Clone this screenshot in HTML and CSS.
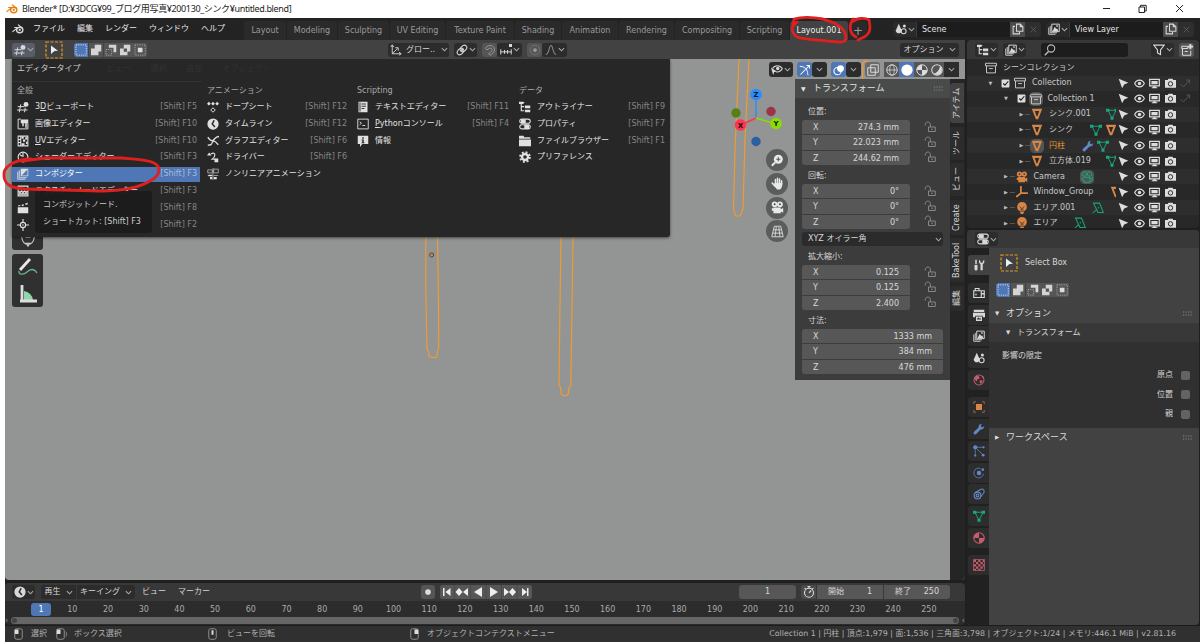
FILE: index.html
```html
<!DOCTYPE html>
<html lang="ja">
<head>
<meta charset="utf-8">
<title>Blender</title>
<link rel="stylesheet" href="styles.css">
</head>
<body>
<svg class="sprite" aria-hidden="true">
  <symbol id="chev" viewBox="0 0 8 8"><path d="M1 2.500l3 3 3-3" fill="none" stroke="currentColor" stroke-width="1.200"/></symbol>
  <symbol id="blender" viewBox="0 0 16 16"><path d="M1 11.500L8 6H3.500M8.500 2.500L14 7" fill="none" stroke="currentColor" stroke-width="1.600" stroke-linecap="round"/><ellipse cx="10.300" cy="9.300" rx="4.200" ry="3.700" fill="none" stroke="currentColor" stroke-width="1.800"/><circle cx="10.300" cy="9.300" r="1.500" fill="currentColor"/></symbol>
  <symbol id="view3d" viewBox="0 0 16 16"><path d="M1 7.500h9M0 12h14M5 4.500L3 15M11 9L10 15" fill="none" stroke="currentColor" stroke-width="1.300"/><circle cx="12" cy="4.500" r="3.300" fill="currentColor"/></symbol>
  <symbol id="image" viewBox="0 0 16 16"><path d="M5 1.500H1.500v13h13V7" fill="none" stroke="currentColor" stroke-width="1.300"/><path d="M5 2h10v5h-2v6h-2V7H9v4H7V7H5z" fill="currentColor"/></symbol>
  <symbol id="uv" viewBox="0 0 16 16"><path d="M1.500 1.500h13v13h-13zM5 2v12M2 6h3M2 10h3" fill="none" stroke="currentColor" stroke-width="1.400"/><path d="M6 2h3v3H6zM11 3h3v3h-3zM8 6h3v3H8zM12 9h2v3h-2zM6 11h4v3H6z" fill="currentColor"/></symbol>
  <symbol id="shader" viewBox="0 0 16 16"><circle cx="8" cy="8" r="6.500" fill="none" stroke="currentColor" stroke-width="1.500"/><path d="M8 8V2M4 5l3 2" stroke="currentColor" stroke-width="1.500"/></symbol>
  <symbol id="comp" viewBox="0 0 16 16"><path d="M5 1h10v10H5z" fill="currentColor"/><path d="M6 10l8-8v8z" fill="#5078b8"/><path d="M3 3v10h10M1 5v10h10" fill="none" stroke="currentColor" stroke-width="1.200"/></symbol>
  <symbol id="texture" viewBox="0 0 16 16"><path d="M1.500 1.500h13v13h-13zM2 5h12" fill="none" stroke="currentColor" stroke-width="1.500"/><path d="M2 8l2 2 2-2 2 2 2-2 2 2 2-2M2 12h12" fill="none" stroke="currentColor" stroke-width="1.700"/></symbol>
  <symbol id="clapper" viewBox="0 0 16 16"><path d="M1 7h14v8H1zM1 5l3-1 1 1-3 1zM6 3.500L9 3v2L7 5.500zM11 2l3-1 .5 2-3 1z" fill="currentColor"/></symbol>
  <symbol id="track" viewBox="0 0 16 16"><circle cx="8" cy="8" r="3.500" fill="none" stroke="currentColor" stroke-width="1.500"/><path d="M8 0v4M8 12v4M0 8h4M12 8h4" stroke="currentColor" stroke-width="1.500"/><circle cx="8" cy="8" r="1" fill="currentColor"/></symbol>
  <symbol id="dope" viewBox="0 0 16 16"><path d="M0 3.500L2.500 1 5 3.500 2.500 6zM5.500 3.500L8 1l2.500 2.500L8 6zM11 3.500L13.500 1 16 3.500 13.500 6z" fill="currentColor"/><path d="M8 9l3 3-3 3-3-3z" fill="none" stroke="currentColor" stroke-width="1.300"/></symbol>
  <symbol id="clock" viewBox="0 0 16 16"><circle cx="8" cy="8" r="7.500" fill="currentColor"/><path d="M9.500 3L7 8l3.500 4" fill="none" stroke="#272727" stroke-width="2"/></symbol>
  <symbol id="graph" viewBox="0 0 16 16"><path d="M1 3c4 5 5 5 7 4s3-5 8-5M1 13.500c5 0 5-1 6-3.500s3-3 8 3" fill="none" stroke="currentColor" stroke-width="1.700"/></symbol>
  <symbol id="driver" viewBox="0 0 16 16"><path d="M5 4c8-4 6 4 2 7h5" fill="none" stroke="currentColor" stroke-width="1.500"/><path d="M0 6l3-4 3 4zM10 10h5v5h-5z" fill="currentColor"/></symbol>
  <symbol id="nla" viewBox="0 0 16 16"><path d="M1 2.500h6v4H1zM9 1.500h6v5H9zM1 10h6M9 10h6M8 0v16" fill="none" stroke="currentColor" stroke-width="1.100" opacity=".75"/><path d="M2 9h5v2H2zM4 12h3v3H4zM9 12h4v3H9z" fill="currentColor"/></symbol>
  <symbol id="text" viewBox="0 0 16 16"><path d="M2 1h12v14H2z" fill="currentColor"/><path d="M6 4h6M6 7h6M6 10h4M4 2v12" stroke="#272727" stroke-width="1.200"/></symbol>
  <symbol id="console" viewBox="0 0 16 16"><path d="M1 1.500h14v13H1z" fill="none" stroke="currentColor" stroke-width="1.200"/><path d="M3.500 5L6 7 3.500 9M7 10h4" fill="none" stroke="currentColor" stroke-width="1.200"/></symbol>
  <symbol id="info" viewBox="0 0 16 16"><path d="M1 1h14v11H7l-3 4v-4H1z" fill="currentColor"/><path d="M7 3h2v2H7zM6 6h3v4h1v1H6v-1h1V7H6z" fill="#272727"/></symbol>
  <symbol id="outliner" viewBox="0 0 16 16"><path d="M0 2h7M3 3v10h4M3 7.500h4" fill="none" stroke="currentColor" stroke-width="1.500"/><path d="M0 1h6v3H0zM8 6h7v3.500H8zM8 11.500h7V15H8z" fill="currentColor"/></symbol>
  <symbol id="props" viewBox="0 0 16 16"><rect x="1" y="1.500" width="14" height="5.500" rx="2.700" fill="none" stroke="currentColor" stroke-width="1.400"/><rect x="1" y="9" width="14" height="5.500" rx="2.700" fill="none" stroke="currentColor" stroke-width="1.400"/><path d="M2.500 1.500H9V7H2.500zM7 9h6.500v5.500H7z" fill="currentColor"/></symbol>
  <symbol id="folder" viewBox="0 0 16 16"><path d="M0 1h6l1 2h8v2H0zM0 6h16v9H0z" fill="currentColor"/></symbol>
  <symbol id="gear" viewBox="0 0 16 16"><circle cx="8" cy="8" r="4" fill="none" stroke="currentColor" stroke-width="3.200"/><circle cx="8" cy="8" r="6.500" fill="none" stroke="currentColor" stroke-width="2.500" stroke-dasharray="2.600 2.500"/></symbol>
  <symbol id="cursor" viewBox="0 0 16 16"><path d="M1 1l14 6-6 2.500L6 15z" fill="currentColor"/></symbol>
  <symbol id="selbox" viewBox="0 0 18 18"><rect x="1" y="1" width="16" height="16" fill="none" stroke="#e19b20" stroke-width="1.200" stroke-dasharray="3 1.500"/><path d="M6 4.500l7 5.200-3.500.4L6 13z" fill="#eee"/></symbol>
  <symbol id="m1" viewBox="0 0 15 15"><rect x="2" y="2" width="11" height="11" fill="none" stroke="#dce6f7" stroke-dasharray="1.200 1.200"/></symbol>
  <symbol id="m2" viewBox="0 0 15 15"><path d="M6 2h7v7h-3v4H2V6h4z" fill="#d4d4d4"/></symbol>
  <symbol id="m3" viewBox="0 0 15 15"><path d="M5 2h8v8h-3V5H5z" fill="#d4d4d4"/><rect x="2" y="7" width="6" height="6" fill="none" stroke="#aaa" stroke-dasharray="1.200 1.200"/></symbol>
  <symbol id="m4" viewBox="0 0 15 15"><path d="M6 2h7v7h-3v4H2V6h4zM6 6v3.500h3.500V6z" fill="#d4d4d4" fill-rule="evenodd"/></symbol>
  <symbol id="m5" viewBox="0 0 15 15"><rect x="2" y="2" width="11" height="11" fill="none" stroke="#aaa" stroke-dasharray="1.200 1.200"/><path d="M5 5h5v5H5z" fill="#ddd"/></symbol>
  <symbol id="axes" viewBox="0 0 16 16"><path d="M3 2v11h11M3 13l7-7M1 4l2-3 2 3M12 11l3 2-3 2M7 5h4v4" fill="none" stroke="currentColor" stroke-width="1.200"/></symbol>
  <symbol id="pivot" viewBox="0 0 16 16"><ellipse cx="6" cy="10" rx="5" ry="3.500" transform="rotate(-45 6 10)" fill="none" stroke="currentColor" stroke-width="1.400"/><ellipse cx="10" cy="6" rx="5" ry="3.500" transform="rotate(-45 10 6)" fill="none" stroke="currentColor" stroke-width="1.400"/><circle cx="8" cy="8" r="1.500" fill="currentColor"/></symbol>
  <symbol id="magnet" viewBox="0 0 16 16"><path d="M2 6c4-7 13-4 12 3-1 3-3 4-6 6l-2-2c4-3 6-4 4-7-2-1-4 0-6 2z" fill="none" stroke="currentColor" stroke-width="1.300"/></symbol>
  <symbol id="snap" viewBox="0 0 16 16"><path d="M1 7v7M15 7v7M1 10.500h14M6 8v5M10 8v5" stroke="currentColor" stroke-width="1.300"/><path d="M12 0h4v4h-4z" fill="currentColor"/></symbol>
  <symbol id="dot" viewBox="0 0 16 16"><circle cx="8" cy="8" r="6.500" fill="none" stroke="currentColor" opacity=".5"/><circle cx="8" cy="8" r="2.500" fill="currentColor"/></symbol>
  <symbol id="fall" viewBox="0 0 16 16"><path d="M1 14c5 0 4-12 7-12s2 12 7 12" fill="none" stroke="currentColor" stroke-width="1.400"/></symbol>
  <symbol id="scene" viewBox="0 0 16 16"><path d="M5 1l4 9c0 5-8 5-8 0z" fill="currentColor"/><circle cx="11.500" cy="11" r="3.300" fill="none" stroke="currentColor" stroke-width="1.400"/><circle cx="12.500" cy="4" r="2" fill="currentColor"/></symbol>
  <symbol id="layer" viewBox="0 0 16 16"><path d="M5 1.500h10v10H5z" fill="none" stroke="currentColor" stroke-width="1.300"/><path d="M6 11l3-6 2 3 1-1 2 4zM11 3h2v2h-2z" fill="currentColor"/><path d="M3 4v9h9M1 6v9h9" fill="none" stroke="currentColor" stroke-width="1.200"/></symbol>
  <symbol id="copy" viewBox="0 0 16 16"><path d="M6 1.500h5l3.500 3.500v6H6zM11 2v3h3M4 4.500H1.500v10H10V12" fill="none" stroke="currentColor" stroke-width="1.400"/></symbol>
  <symbol id="x" viewBox="0 0 16 16"><path d="M3 3l10 10M13 3L3 13" stroke="currentColor" stroke-width="1.300"/></symbol>
  <symbol id="visib" viewBox="0 0 16 16"><path d="M2 6c3-5 10-5 13 0-2 4-5 5-8 4.500" fill="none" stroke="currentColor" stroke-width="1.500"/><circle cx="9" cy="6" r="2.300" fill="currentColor"/><path d="M0 5l8 5-4 1-1 4z" fill="currentColor"/></symbol>
  <symbol id="gizmo" viewBox="0 0 16 16"><path d="M1 3c7 0 11 5 11 12M2 14L14 2M10 2h4v4" fill="none" stroke="currentColor" stroke-width="1.400"/></symbol>
  <symbol id="overlay" viewBox="0 0 16 16"><circle cx="6" cy="9.500" r="4.800" fill="none" stroke="currentColor" stroke-width="1.400"/><circle cx="10" cy="6" r="4.500" fill="currentColor"/></symbol>
  <symbol id="xray" viewBox="0 0 16 16"><path d="M5 1h10v10H5zM1 5h10v10H1z" fill="none" stroke="currentColor" stroke-width="1.300"/></symbol>
  <symbol id="wire" viewBox="0 0 16 16"><circle cx="8" cy="8" r="7" fill="none" stroke="currentColor" stroke-width="1.200"/><ellipse cx="8" cy="8" rx="3" ry="7" fill="none" stroke="currentColor"/><path d="M1 8h14" stroke="currentColor"/></symbol>
  <symbol id="solid" viewBox="0 0 16 16"><circle cx="8" cy="8" r="7.500" fill="currentColor"/></symbol>
  <symbol id="matprev" viewBox="0 0 16 16"><circle cx="8" cy="8" r="7" fill="none" stroke="currentColor" stroke-width="1.300"/><path d="M8 1v7h7A7 7 0 0 1 8 15V8H1a7 7 0 0 1 7-7z" fill="currentColor"/></symbol>
  <symbol id="rend" viewBox="0 0 16 16"><circle cx="8" cy="8" r="7" fill="none" stroke="currentColor" stroke-width="1.400"/><path d="M12 3A6 6 0 0 1 4 13c5-2 7-5 8-10z" fill="currentColor"/></symbol>
  <symbol id="lock" viewBox="0 0 16 16"><path d="M6 8h9v6H6zM8.500 8V5C8.500 0 1.500 0 1.500 6" fill="none" stroke="currentColor" stroke-width="1.300"/><path d="M10 10h1.500v2H10z" fill="currentColor"/></symbol>
  <symbol id="search" viewBox="0 0 16 16"><circle cx="9.500" cy="6" r="4.800" fill="none" stroke="currentColor" stroke-width="1.500"/><path d="M6 10l-5 5" stroke="currentColor" stroke-width="1.800"/></symbol>
  <symbol id="funnel" viewBox="0 0 16 16"><path d="M1 1.500h14L10 8v6l-4-2V8z" fill="none" stroke="currentColor" stroke-width="1.500"/></symbol>
  <symbol id="newcol" viewBox="0 0 16 16"><path d="M1 3h8v3H1zM2 6v9h11V9M5 10h4" fill="none" stroke="currentColor" stroke-width="1.300"/><path d="M12.500 0v7M9 3.500h7" stroke="currentColor" stroke-width="2.500"/></symbol>
  <symbol id="coll" viewBox="0 0 16 16"><path d="M.7 1.700h14.600v3.500H.7zM2 5.200v9.300h12V5.200M5.500 8.800h5" fill="none" stroke="currentColor" stroke-width="1.300"/></symbol>
  <symbol id="check" viewBox="0 0 16 16"><rect x="1" y="1" width="14" height="14" rx="1.500" fill="#ddd"/><path d="M4 8l3 3 6-7" fill="none" stroke="#222" stroke-width="2"/></symbol>
  <symbol id="tri" viewBox="0 0 16 16"><path d="M1 1h14L9.500 15h-3zM5 4l2.500 7h1L11 4z" fill="currentColor" fill-rule="evenodd"/></symbol>
  <symbol id="mesh" viewBox="0 0 16 16"><path d="M2.500 3h11L8 13.500z" fill="none" stroke="currentColor" stroke-width="1.300"/><path d="M0 1h4.500v4H0zM11.500 1H16v4h-4.500zM6 11.500h4v4H6z" fill="currentColor"/></symbol>
  <symbol id="wrench" viewBox="0 0 16 16"><path d="M15 4c0 4-3 5-5 4.500L4 15c-2 1-4-1-3-3l6.500-6C7 3 9 1 12 1L10 3.500 12.500 6z" fill="currentColor"/></symbol>
  <symbol id="movie" viewBox="0 0 16 16"><circle cx="4.500" cy="4" r="3.500" fill="currentColor"/><circle cx="11" cy="4" r="3.500" fill="currentColor"/><path d="M3 8h9v2l3-1.500v6L12 13v2H3v-3H1V9h2z" fill="currentColor"/><circle cx="4.500" cy="4" r="1.200" fill="#444"/><circle cx="11" cy="4" r="1.200" fill="#444"/></symbol>
  <symbol id="movieline" viewBox="0 0 16 16"><circle cx="4.500" cy="4" r="3" fill="none" stroke="currentColor" stroke-width="1.300"/><circle cx="11.500" cy="4" r="3" fill="none" stroke="currentColor" stroke-width="1.300"/><path d="M3 8.500h8.500V11L15 9v5l-3.500-1v2H4v-3H1.500V9" fill="none" stroke="currentColor" stroke-width="1.300"/></symbol>
  <symbol id="empty" viewBox="0 0 16 16"><path d="M6.500 1v8.500H15M6.500 9.500L1 14" fill="none" stroke="currentColor" stroke-width="2.400" stroke-linecap="round"/></symbol>
  <symbol id="bulb" viewBox="0 0 16 16"><path d="M8 0a6.500 6.500 0 0 1 4 11.500H4A6.500 6.500 0 0 1 8 0zM5 12.500h6L9.500 16h-3z" fill="currentColor"/><path d="M5 6l2 2v3M11 6L9 8v3" fill="none" stroke="#2a2a2a"/></symbol>
  <symbol id="area" viewBox="0 0 16 16"><path d="M2 1.500h8L15 14H8zM1 15l5-5" fill="none" stroke="currentColor" stroke-width="1.400"/><circle cx="8.500" cy="7.500" r="1" fill="currentColor"/></symbol>
  <symbol id="eye" viewBox="0 0 16 16"><path d="M1 8c3-6.500 11-6.500 14 0-3 6.500-11 6.500-14 0z" fill="none" stroke="currentColor" stroke-width="1.600"/><circle cx="8" cy="8" r="2.500" fill="currentColor"/></symbol>
  <symbol id="mon" viewBox="0 0 16 16"><path d="M1 2h14v9.500H1z" fill="none" stroke="currentColor" stroke-width="1.800"/><path d="M3.500 4.200h9v5h-9zM6 12h4v1.500h2V15H4v-1.500h2z" fill="currentColor"/></symbol>
  <symbol id="cam" viewBox="0 0 16 16"><path d="M0 3h4l1-2h6l1 2h4v11H0z" fill="currentColor"/><circle cx="8" cy="8.500" r="3.200" fill="none" stroke="#2a2a2a" stroke-width="1.400"/></symbol>
  <symbol id="holdout" viewBox="0 0 16 16"><path d="M1 9l4 4L14 3M9 3h5v5" fill="none" stroke="currentColor" stroke-width="1.300"/></symbol>
  <symbol id="tool" viewBox="0 0 16 16"><path d="M3 1h2v6H3zM2 8h4v6c-1 2-3 2-4 0zM8 1v4l2 2v8h3V7l2-2V1l-2 2v2h-3V3z" fill="currentColor"/></symbol>
  <symbol id="render" viewBox="0 0 16 16"><path d="M1 5h10v9H1zM3 5V2h5v3M11 5h4v9h-4" fill="none" stroke="currentColor" stroke-width="1.500"/><path d="M11 8h4v2h-4zM3 9h2v2H3z" fill="currentColor"/></symbol>
  <symbol id="output" viewBox="0 0 16 16"><path d="M1 1h14v3H1zM0 5h16v6h-3V9H3v2H0zM4 10h8v6H4z" fill="currentColor"/><path d="M5 14l2-3 2 2 1-1 1 2z" fill="#333"/></symbol>
  <symbol id="world" viewBox="0 0 16 16"><circle cx="8" cy="8" r="6.600" fill="none" stroke="currentColor" stroke-width="1.400"/><path d="M2 5l3-3 3 1 1 3-3 1-1 3-2-2zM9 8l4 1-2 4-2-1zM12 2l3 2-2 2z" fill="currentColor"/></symbol>
  <symbol id="object" viewBox="0 0 16 16"><path d="M4 4h8v8H4z" fill="currentColor"/><path d="M1 4V1h3M12 1h3v3M15 12v3h-3M4 15H1v-3" fill="none" stroke="currentColor" stroke-width="1.200" opacity=".7"/></symbol>
  <symbol id="part" viewBox="0 0 16 16"><path d="M3 3h11M3 3v11M3 3l10 10" stroke="currentColor" stroke-width="1"/><circle cx="3" cy="3" r="2.800" fill="currentColor"/><circle cx="14" cy="3" r="1.500" fill="currentColor"/><circle cx="3" cy="14" r="1.500" fill="currentColor"/><circle cx="13.500" cy="13.500" r="1.900" fill="currentColor"/></symbol>
  <symbol id="phys" viewBox="0 0 16 16"><path d="M10 2A6.500 6.500 0 1 0 14 9" fill="none" stroke="currentColor" stroke-width="1.300" opacity=".8"/><circle cx="8" cy="8" r="3" fill="currentColor"/><circle cx="13" cy="3.500" r="1.800" fill="currentColor"/></symbol>
  <symbol id="constr" viewBox="0 0 16 16"><circle cx="6" cy="10" r="4.500" fill="none" stroke="currentColor" stroke-width="1.500"/><circle cx="6" cy="10" r="1.800" fill="none" stroke="currentColor" stroke-width="1.500"/><path d="M3 6l7-4c4-2 6 2 4 5l-4 5" fill="none" stroke="currentColor" stroke-width="1.400"/></symbol>
  <symbol id="mat" viewBox="0 0 16 16"><circle cx="8" cy="8" r="7" fill="none" stroke="currentColor" stroke-width="1.400"/><path d="M8 8V1a7 7 0 0 0-7 7zM8 8h7a7 7 0 0 1-7 7z" fill="currentColor"/></symbol>
  <symbol id="checker" viewBox="0 0 16 16"><path d="M.7.700h14.600v14.600H.7z" fill="none" stroke="currentColor"/><path d="M1 1h3v3H1zM7 1h3v3H7zM13 1h2v3h-2zM4 4h3v3H4zM10 4h3v3h-3zM1 7h3v3H1zM7 7h3v3H7zM13 7h2v3h-2zM4 10h3v3H4zM10 10h3v3h-3zM1 13h3v2H1zM7 13h3v2H7z" fill="currentColor"/></symbol>
  <symbol id="stop" viewBox="0 0 16 16"><circle cx="8" cy="9" r="6" fill="none" stroke="currentColor" stroke-width="1.500"/><path d="M8 9l3-3M8 3V0M6 .7h4M2 3l2 1M14 3l-2 1" stroke="currentColor" stroke-width="1.500"/></symbol>
  <symbol id="mouseL" viewBox="0 0 12 16"><rect x="1" y="1" width="10" height="14" rx="2.500" fill="none" stroke="#999" stroke-width="1.200"/><path d="M1 2h5v6H1z" fill="#ddd"/></symbol>
  <symbol id="mouseM" viewBox="0 0 12 16"><rect x="1" y="1" width="10" height="14" rx="2.500" fill="none" stroke="#999" stroke-width="1.200"/><path d="M4.700 3h2.600v6H4.700z" fill="#ddd"/></symbol>
  <symbol id="mouseR" viewBox="0 0 12 16"><rect x="1" y="1" width="10" height="14" rx="2.500" fill="none" stroke="#999" stroke-width="1.200"/><path d="M6 2h5v6H6z" fill="#ddd"/></symbol>
  <symbol id="grip" viewBox="0 0 10 5"><path d="M0 1h10M0 4h10" stroke="currentColor" stroke-width="1" stroke-dasharray="1.200 1.300"/></symbol>
</svg>

<header class="titlebar">
  <svg class="i12 logo-orange"><use href="#blender"/></svg>
  <span class="title">Blender* [D:¥3DCG¥99_ブログ用写真¥200130_シンク¥untitled.blend]</span>
  <svg class="winbtns" viewBox="0 0 90 18"><path d="M4 8.500h7" stroke="#222"/><path d="M40 7h5.500v5.500H40zM41.500 7V5.300h5.700v5.700h-1.500" fill="none" stroke="#222"/><path d="M77 5l7 7M84 5l-7 7" stroke="#222" stroke-width="1"/></svg>
</header>

<div class="app">
  <nav class="topbar">
    <svg class="i12"><use href="#blender"/></svg>
    <div class="menus"><span>ファイル</span><span>編集</span><span>レンダー</span><span>ウィンドウ</span><span>ヘルプ</span></div>
    <div class="tabs"><span>Layout</span><span>Modeling</span><span>Sculpting</span><span>UV Editing</span><span>Texture Paint</span><span>Shading</span><span>Animation</span><span>Rendering</span><span>Compositing</span><span>Scripting</span><span class="active">Layout.001</span><span class="plus">+</span></div>
    <div class="idblock scene-id"><span class="ib"><svg class="i12"><use href="#scene"/></svg><svg class="i7"><use href="#chev"/></svg></span><span class="idname">Scene</span><span class="cp"><svg class="i12"><use href="#copy"/></svg></span><span class="cl"><svg class="i9"><use href="#x"/></svg></span></div>
    <div class="idblock"><span class="ib"><svg class="i12"><use href="#layer"/></svg><svg class="i7"><use href="#chev"/></svg></span><span class="idname">View Layer</span><span class="cp"><svg class="i12"><use href="#copy"/></svg></span><span class="cl"><svg class="i9"><use href="#x"/></svg></span></div>
  </nav>

  <div class="workspace">
    <main class="left">
      <section class="view3d">
        <div class="vheader">
          <span class="btn ed lit"><svg class="i12"><use href="#view3d"/></svg><svg class="i7"><use href="#chev"/></svg></span>
          <svg class="sel"><use href="#selbox"/></svg>
          <div class="modes"><svg class="on"><use href="#m1"/></svg><svg><use href="#m2"/></svg><svg><use href="#m3"/></svg><svg><use href="#m4"/></svg><svg><use href="#m5"/></svg></div>
          <div class="vmid">
            <span class="btn w-orient"><svg class="i12"><use href="#axes"/></svg><b>グロー..</b><svg class="i7"><use href="#chev"/></svg></span>
            <span class="btn w-pivot"><svg class="i12"><use href="#pivot"/></svg><svg class="i7"><use href="#chev"/></svg></span>
            <span class="pair"><span class="tog off"><svg class="i12"><use href="#magnet"/></svg></span><span class="btn"><svg class="i12"><use href="#snap"/></svg><svg class="i7"><use href="#chev"/></svg></span></span>
            <span class="pair dim"><span class="tog off"><svg class="i12"><use href="#dot"/></svg></span><span class="btn"><svg class="i12"><use href="#fall"/></svg><svg class="i7"><use href="#chev"/></svg></span></span>
          </div>
          <span class="btn opt"><b>オプション</b><svg class="i7"><use href="#chev"/></svg></span>
        </div>

        <div class="canvas">
          <svg class="wires" viewBox="0 0 960 521">
            <g fill="none" stroke="#ee9c33" stroke-width="1.200">
              <path d="M420.800 178V230L422 290.500 423.500 292 424 297 426 298.500H431L432.300 296.500 432.500 292 433.700 289 433.500 240 432.500 178"/>
              <path d="M556 178L554.800 260 554 326 555.700 329 556.200 335 558 336.500H562L563.500 334 564 329 565.800 326 567 250 568 178"/>
              <path d="M734 0L730 90 728.500 150 730.500 157H735L738 150 740 80 744 0"/>
              <path d="M857.500 20l.5-16 2-2 9 2M862.500 20"/>
            </g>
            <path d="M420.500 178l.5-30q0-7 5-7t6 7l1 30M556 178l.500-32q1-5 6-5t6 5l-1 32" fill="none" stroke="#362a21"/>
            <circle cx="426.700" cy="196" r="2" fill="#d98b2b" stroke="#444"/>
          </svg>
          <div class="overlaybar">
            <span class="btn"><svg class="i12"><use href="#visib"/></svg><svg class="i7"><use href="#chev"/></svg></span>
            <span class="pair"><span class="tog on"><svg class="i12"><use href="#gizmo"/></svg></span><span class="btn c"><svg class="i7"><use href="#chev"/></svg></span></span>
            <span class="pair"><span class="tog on"><svg class="i12"><use href="#overlay"/></svg></span><span class="btn c"><svg class="i7"><use href="#chev"/></svg></span></span>
            <span class="tog xr"><svg class="i12"><use href="#xray"/></svg></span>
            <span class="pair shade"><span class="tog"><svg class="i12"><use href="#wire"/></svg></span><span class="tog on"><svg class="i12"><use href="#solid"/></svg></span><span class="tog"><svg class="i12"><use href="#matprev"/></svg></span><span class="tog"><svg class="i12"><use href="#rend"/></svg></span><span class="btn c"><svg class="i7"><use href="#chev"/></svg></span></span>
          </div>

          <svg class="navgizmo" viewBox="0 0 60 66">
            <path d="M27 34V12" stroke="#2a8dff" stroke-width="1.500"/><path d="M27 34L12 41" stroke="#ff3352" stroke-width="1.500"/><path d="M27 34l20 6" stroke="#8bdc00" stroke-width="1.500"/>
            <circle cx="42" cy="27.500" r="4.700" fill="#9c3447"/><circle cx="7" cy="29" r="4.700" fill="#587f16"/><circle cx="27" cy="57.500" r="4.700" fill="#2c5f9f"/>
            <circle cx="27" cy="10.500" r="5.800" fill="#2a8dff"/><circle cx="11.500" cy="41" r="5.800" fill="#ff3352"/><circle cx="47" cy="39.500" r="5.800" fill="#8bdc00"/>
            <g font-size="7" font-weight="bold" text-anchor="middle" fill="#151515"><text x="27" y="13">Z</text><text x="11.500" y="43.500">X</text><text x="47" y="42">Y</text></g>
          </svg>
          <div class="navbtns">
            <span><svg viewBox="0 0 16 16"><circle cx="9" cy="6.500" r="5.500" fill="#e8e8e8"/><path d="M9 4v5M6.500 6.500h5" stroke="#555" stroke-width="1.300"/><path d="M5 10.500l-4 4" stroke="#e8e8e8" stroke-width="2.500"/></svg></span>
            <span><svg viewBox="0 0 16 16"><path d="M5.500 9V3M8 8V1.500M10.500 8V2.500M13 9V4.500M5 11L1.500 7.500" stroke="#e8e8e8" stroke-width="1.900" stroke-linecap="round"/><path d="M4.500 7.500H14c0 4-1 7-3 8H7.500L3 10z" fill="#e8e8e8"/></svg></span>
            <span><svg><use href="#movie"/></svg></span>
            <span><svg viewBox="0 0 16 16"><path d="M4 1.500h8l3 13H1zM3 6h10M2 10h12M6.500 2L5 14M9.500 2L11 14" fill="none" stroke="#e0e0e0" stroke-width="1.100"/></svg></span>
          </div>

          <aside class="npanel">
            <h3><i>▼</i>トランスフォーム<svg class="grip"><use href="#grip"/></svg></h3>
            <div class="nbody">
              <label>位置:</label>
              <div class="vec"><div class="fields"><p>X<b>274.3 mm</b></p><p>Y<b>22.023 mm</b></p><p>Z<b>244.62 mm</b></p></div><div class="locks"><svg><use href="#lock"/></svg><svg><use href="#lock"/></svg><svg><use href="#lock"/></svg></div></div>
              <label>回転:</label>
              <div class="vec"><div class="fields"><p>X<b>0°</b></p><p>Y<b>0°</b></p><p>Z<b>0°</b></p></div><div class="locks"><svg><use href="#lock"/></svg><svg><use href="#lock"/></svg><svg><use href="#lock"/></svg></div></div>
              <div class="euler">XYZ オイラー角<svg class="i7"><use href="#chev"/></svg></div>
              <label>拡大縮小:</label>
              <div class="vec"><div class="fields"><p>X<b>0.125</b></p><p>Y<b>0.125</b></p><p>Z<b>2.400</b></p></div><div class="locks"><svg><use href="#lock"/></svg><svg><use href="#lock"/></svg><svg><use href="#lock"/></svg></div></div>
              <label>寸法:</label>
              <div class="fields full"><p>X<b>1333 mm</b></p><p>Y<b>384 mm</b></p><p>Z<b>476 mm</b></p></div>
            </div>
          </aside>
          <div class="ntabs"><span class="active t1">アイテム</span><span class="t2">ツール</span><span class="t2">ビュー</span><span class="t3">Create</span><span class="t4">BakeTool</span><span class="t5">編集</span></div>

          <div class="toolshelf">
            <span class="cut"><svg viewBox="0 0 20 12"><path d="M3 1c1 11 13 11 14 0M7 1h6M8 8l2 3 2-3z" fill="none" stroke="#ccc" stroke-width="1.400"/></svg></span>
            <span class="tools"><svg viewBox="0 0 20 20"><path d="M2 13L12 2" stroke="#e8e8e8" stroke-width="2.800"/><path d="M1 14c-1 4 5 4 8 1s7-4 10 1" fill="none" stroke="#66b58a" stroke-width="1.300"/></svg><svg viewBox="0 0 20 20"><path d="M6 7a10 10 0 0 1 9 9H6z" fill="#8fd6ac"/><path d="M4 1v17M2 17h17" fill="none" stroke="#ddd" stroke-width="2.800"/></svg></span>
          </div>

          <div class="edmenu">
            <div class="edtitle">エディタータイプ<span class="ghost"><i>ビュー</i><i>選択</i><i>追加</i><i>オブジェクト</i></span></div>
            <div class="cols">
              <ul class="first">
                <li class="h">全般</li>
                <li><svg><use href="#view3d"/></svg>3<u>D</u>ビューポート<kbd>[Shift] F5</kbd></li>
                <li><svg><use href="#image"/></svg>画像エディター<kbd>[Shift] F10</kbd></li>
                <li><svg><use href="#uv"/></svg><u>U</u>Vエディター<kbd>[Shift] F10</kbd></li>
                <li><svg><use href="#shader"/></svg>シェーダーエディター<kbd>[Shift] F3</kbd></li>
                <li class="hot"><svg><use href="#comp"/></svg>コンポジター<kbd>[Shift] F3</kbd></li>
                <li><svg><use href="#texture"/></svg>テクスチャノードエディター<kbd>[Shift] F3</kbd></li>
                <li><svg><use href="#clapper"/></svg><span class="under">ビデオシーケンサー</span><kbd>[Shift] F8</kbd></li>
                <li><svg><use href="#track"/></svg><span class="under">動画クリップエディター</span><kbd>[Shift] F2</kbd></li>
              </ul>
              <ul>
                <li class="h">アニメーション</li>
                <li><svg><use href="#dope"/></svg>ドープシート<kbd>[Shift] F12</kbd></li>
                <li><svg><use href="#clock"/></svg>タイムライン<kbd>[Shift] F12</kbd></li>
                <li><svg><use href="#graph"/></svg>グラフエディター<kbd>[Shift] F6</kbd></li>
                <li><svg><use href="#driver"/></svg>ドライバー<kbd>[Shift] F6</kbd></li>
                <li><svg><use href="#nla"/></svg>ノンリニアアニメーション</li>
              </ul>
              <ul>
                <li class="h">Scripting</li>
                <li><svg><use href="#text"/></svg>テキストエディター<kbd>[Shift] F11</kbd></li>
                <li><svg><use href="#console"/></svg><u>P</u>ythonコンソール<kbd>[Shift] F4</kbd></li>
                <li><svg><use href="#info"/></svg>情報</li>
              </ul>
              <ul>
                <li class="h">データ</li>
                <li><svg><use href="#outliner"/></svg>アウトライナー<kbd>[Shift] F9</kbd></li>
                <li><svg><use href="#props"/></svg>プロパティ<kbd>[Shift] F7</kbd></li>
                <li><svg><use href="#folder"/></svg>ファイルブラウザー<kbd>[Shift] F1</kbd></li>
                <li><svg><use href="#gear"/></svg>プリファレンス</li>
              </ul>
            </div>
            <div class="tooltip"><p>コンポジットノード.</p><p>ショートカット: [Shift] F3</p></div>
          </div>
        </div>
      </section>

      <section class="timeline">
        <div class="theader">
          <span class="btn ed"><svg class="i12"><use href="#clock"/></svg><svg class="i7"><use href="#chev"/></svg></span>
          <span class="btn play">再生<svg class="i7"><use href="#chev"/></svg></span><span class="btn key">キーイング<svg class="i7"><use href="#chev"/></svg></span>
          <span class="tm">ビュー</span><span class="tm tm2">マーカー</span>
          <span class="tog rec"><svg class="i9"><use href="#solid"/></svg></span>
          <svg class="transport" viewBox="0 0 92 14"><rect width="92" height="14" rx="2.500" fill="#575757"/><path d="M14.500 0v14M30.500 0v14M46 0v14M61.500 0v14M77 0v14" stroke="#444" stroke-width=".7"/><path d="M3 3h1.500v8H3zM10.500 3v8L5.500 7zM15.500 7l3.500-4 3.500 4-3.500 4zM28 3v8l-5-4zM42 2v10l-8-5zM50 2v10l8-5zM64 3v8l5-4zM69 7l3.500-4L76 7l-3.500 4zM82 3v8l5-4zM87 3h1.500v8H87z" fill="#eee"/></svg>
          <span class="frame">1</span>
          <span class="range"><em><svg class="i12"><use href="#stop"/></svg></em><span>開始<b>1</b></span><span>終了<b>250</b></span></span>
        </div>
        <div class="ruler"><span class="cur">1</span><div class="nums"><i>10</i><i>20</i><i>30</i><i>40</i><i>50</i><i>60</i><i>70</i><i>80</i><i>90</i><i>100</i><i>110</i><i>120</i><i>130</i><i>140</i><i>150</i><i>160</i><i>170</i><i>180</i><i>190</i><i>200</i><i>210</i><i>220</i><i>230</i><i>240</i><i>250</i></div></div>
        <div class="scroll"><span>›</span><div class="bar"><i></i><i></i></div><span>‹</span></div>
      </section>
    </main>

    <aside class="right">
      <section class="outliner">
        <div class="oheader"><span class="btn"><svg class="i12"><use href="#outliner"/></svg><svg class="i7"><use href="#chev"/></svg></span><span class="btn"><svg class="i12"><use href="#layer"/></svg><svg class="i7"><use href="#chev"/></svg></span><span class="search"><svg class="i12"><use href="#search"/></svg></span><span class="btn filt"><svg class="i12"><use href="#funnel"/></svg><svg class="i7"><use href="#chev"/></svg></span><span class="tog"><svg class="i12"><use href="#newcol"/></svg></span></div>
        <div class="rows">
          <div class="row"><div class="tree d0"><svg><use href="#coll"/></svg><span>シーンコレクション</span></div></div>
          <div class="row"><div class="tree d1"><i>▼</i><svg class="ck"><use href="#check"/></svg><svg><use href="#coll"/></svg><span>Collection</span></div><svg><use href="#cursor"/></svg><svg><use href="#eye"/></svg><svg><use href="#mon"/></svg><svg><use href="#cam"/></svg><svg class="faint"><use href="#holdout"/></svg></div>
          <div class="row"><div class="tree d2"><i>▼</i><svg class="ck"><use href="#check"/></svg><svg class="sel-ic"><use href="#coll"/></svg><span>Collection 1</span></div><svg><use href="#cursor"/></svg><svg><use href="#eye"/></svg><svg><use href="#mon"/></svg><svg><use href="#cam"/></svg><svg class="faint"><use href="#holdout"/></svg></div>
          <div class="row"><div class="tree d3"><i>▶</i><em></em><svg class="or"><use href="#tri"/></svg><span>シンク.001</span><svg class="gr x1"><use href="#mesh"/></svg></div><svg><use href="#cursor"/></svg><svg><use href="#eye"/></svg><svg><use href="#mon"/></svg><svg><use href="#cam"/></svg></div>
          <div class="row"><div class="tree d3"><i>▶</i><em></em><svg class="or"><use href="#tri"/></svg><span>シンク</span><svg class="gr x2"><use href="#mesh"/></svg><svg class="or"><use href="#tri"/></svg></div><svg><use href="#cursor"/></svg><svg><use href="#eye"/></svg><svg><use href="#mon"/></svg><svg><use href="#cam"/></svg></div>
          <div class="row"><div class="tree d3"><i>▶</i><em></em><svg class="or sel-ic"><use href="#tri"/></svg><span class="act">円柱</span><svg class="bl x2"><use href="#wrench"/></svg><svg class="gr"><use href="#mesh"/></svg></div><svg><use href="#cursor"/></svg><svg><use href="#eye"/></svg><svg><use href="#mon"/></svg><svg><use href="#cam"/></svg></div>
          <div class="row"><div class="tree d3"><i>▶</i><em></em><svg class="or"><use href="#tri"/></svg><span>立方体.019</span><svg class="gr x1"><use href="#mesh"/></svg></div><svg><use href="#cursor"/></svg><svg><use href="#eye"/></svg><svg><use href="#mon"/></svg><svg><use href="#cam"/></svg></div>
          <div class="row"><div class="tree d2"><i>▶</i><em></em><svg class="or"><use href="#movie"/></svg><span>Camera</span><svg class="gr x2 sel-ic"><use href="#movieline"/></svg></div><svg><use href="#cursor"/></svg><svg><use href="#eye"/></svg><svg><use href="#mon"/></svg><svg><use href="#cam"/></svg></div>
          <div class="row"><div class="tree d2"><i>▶</i><em></em><svg class="or"><use href="#empty"/></svg><span>Window_Group</span><svg class="or x2"><use href="#tri"/></svg></div><svg><use href="#cursor"/></svg><svg><use href="#eye"/></svg><svg><use href="#mon"/></svg><svg><use href="#cam"/></svg></div>
          <div class="row"><div class="tree d2"><i>▶</i><em></em><svg class="or"><use href="#bulb"/></svg><span>エリア.001</span><svg class="gr x2"><use href="#area"/></svg></div><svg><use href="#cursor"/></svg><svg><use href="#eye"/></svg><svg><use href="#mon"/></svg><svg><use href="#cam"/></svg></div>
          <div class="row"><div class="tree d2"><i>▶</i><em></em><svg class="or"><use href="#bulb"/></svg><span>エリア</span><svg class="gr x2"><use href="#area"/></svg></div><svg><use href="#cursor"/></svg><svg><use href="#eye"/></svg><svg><use href="#mon"/></svg><svg><use href="#cam"/></svg></div>
        </div>
      </section>

      <section class="properties">
        <div class="pheader"><span class="btn"><svg class="i12"><use href="#props"/></svg><svg class="i7"><use href="#chev"/></svg></span></div>
        <div class="pmain">
          <div class="ptabs">
            <span class="active"><svg><use href="#tool"/></svg></span>
            <span class="gap1"><svg><use href="#render"/></svg></span><span><svg><use href="#output"/></svg></span><span><svg><use href="#layer"/></svg></span><span><svg><use href="#scene"/></svg></span><span class="rd"><svg><use href="#world"/></svg></span>
            <span class="or gap2"><svg><use href="#object"/></svg></span><span class="bl"><svg><use href="#wrench"/></svg></span><span class="bl"><svg><use href="#part"/></svg></span><span class="bl"><svg><use href="#phys"/></svg></span><span class="bl"><svg><use href="#constr"/></svg></span><span class="gr"><svg><use href="#mesh"/></svg></span><span class="rd"><svg><use href="#mat"/></svg></span>
            <span class="rd gap2"><svg><use href="#checker"/></svg></span>
          </div>
          <div class="pbody">
            <div class="toolname"><svg class="sel"><use href="#selbox"/></svg>Select Box</div>
            <div class="modes"><svg class="on"><use href="#m1"/></svg><svg><use href="#m2"/></svg><svg><use href="#m3"/></svg><svg><use href="#m4"/></svg><svg><use href="#m5"/></svg></div>
            <h4><i>▼</i>オプション<svg class="grip"><use href="#grip"/></svg></h4>
            <h5><i>▼</i>トランスフォーム</h5>
            <div class="limits"><p class="lt">影響の限定</p><p>原点<s></s></p><p>位置<s></s></p><p>親<s></s></p></div>
            <h4><i>▶</i>ワークスペース<svg class="grip"><use href="#grip"/></svg></h4>
          </div>
        </div>
      </section>
    </aside>
  </div>

  <footer class="status">
    <svg><use href="#mouseL"/></svg><span class="s1">選択</span>
    <svg><use href="#mouseL"/></svg><small>)</small><span class="s2">ボックス選択</span>
    <svg><use href="#mouseM"/></svg><span class="s3">ビューを回転</span>
    <svg><use href="#mouseR"/></svg><span class="s4">オブジェクトコンテクストメニュー</span>
    <span class="stats">Collection 1 | 円柱 | 頂点:1,979 | 面:1,536 | 三角面:3,798 | オブジェクト:1/24 | メモリ:446.1 MiB | v2.81.16</span>
  </footer>
</div>

<svg class="marks" viewBox="0 0 1200 642"><g fill="none" stroke="#e02020" stroke-width="2.800" stroke-linejoin="round" stroke-linecap="round">
  <path d="M31 159C18 159 5 165 4 173C3 184 10 188 25 189L100 191C125 191 140 187 150 181C160 176 162 167 154 163C146 159 130 159 121 158C90 158 60 158 46 158L22 161"/>
  <path d="M797 22C790 27 791 32 797 37C805 40 824 40 838 42C846 43 847 39 845 33C842 25 832 22 823 19C812 17 801 17 794 19L793 24"/>
  <path d="M853 19C848 26 850 34 856 37M852 22C858 17 866 18 869 20C871 29 870 34 864 37L858 40"/>
</g></svg>
</body>
</html>
```
FILE: styles.css
```css
* { box-sizing: border-box; }
body { margin: 0; width: 1200px; height: 642px; overflow: hidden; position: relative; background: #fff; font: 8px/1 "DejaVu Sans", "Noto Sans CJK JP", sans-serif; color: #d8d8d8; white-space: nowrap; }
p, h3, h4, h5, ul { margin: 0; padding: 0; font-weight: normal; font-size: inherit; list-style: none; }
b, i, em { font-weight: normal; font-style: normal; }
svg { flex: none; display: block; }
.sprite { position: absolute; width: 0; height: 0; }
.i12 { width: 12px; height: 12px; }
.i9 { width: 9px; height: 9px; }
.i7 { width: 7px; height: 7px; color: #aaa; }
.or { color: #d88548; }
.gr { color: #18a67c; }
.bl { color: #6388c8; }
.rd { color: #c75b6b; }

.titlebar { height: 18px; display: flex; align-items: center; padding-left: 6px; color: #222; }
.logo-orange { color: #e87d0d; }
.title { margin-left: 4px; font: 9px/18px "Noto Sans", "Noto Sans CJK JP", sans-serif; letter-spacing: -.370px; }
.winbtns { width: 90px; height: 18px; margin-left: auto; margin-right: 11px; }

.app { margin-left: 5px; height: 624px; background: #1f1f1f; display: flex; flex-direction: column; }
.topbar { height: 22px; display: flex; align-items: center; background: #232323; padding: 0 6px 0 7px; }
.menus { display: flex; gap: 12px; margin-left: 9px; width: 211px; color: #e6e6e6; }
.tabs { align-self: stretch; padding-top: 3px; display: grid; grid-template-columns: 42px 50px 51px 55px 68px 46px 56px 55px 64px 49px 58px 18px; gap: 1px; color: #9a9a9a; }
.tabs span { display: flex; align-items: center; justify-content: center; background: #2a2a2a; border-radius: 3px 3px 0 0; }
.tabs .active { background: #424242; color: #eee; }
.tabs .plus { font-size: 12px; background: #292929; }
.idblock { display: flex; height: 15px; width: 148px; border-radius: 3px; overflow: hidden; background: #1c1c1c; }
.scene-id { margin-left: auto; margin-right: 5px; }
.ib { width: 24px; display: flex; align-items: center; justify-content: center; gap: 1px; background: #2a2a2a; border-right: 1px solid #3a3a3a; }
.idname { flex: 1; padding: 3px 5px; line-height: 9px; color: #e6e6e6; }
.cp, .cl { width: 15px; display: flex; align-items: center; justify-content: center; background: #4b4b4b; }
.cl { background: #2e2e2e; color: #666; width: 16px; }

.workspace { display: flex; height: 585px; gap: 2px; }
.left { width: 960px; display: flex; flex-direction: column; gap: 3px; }
.right { flex: 1; display: flex; flex-direction: column; gap: 2px; margin-right: 1px; }

.btn, .tog { height: 14px; display: flex; align-items: center; justify-content: center; gap: 1px; background: #2c2c2c; border-radius: 3px; }
.tog { background: #555; width: 15px; color: #ddd; }
.off { color: #999; }
.on { background: #4f77b6 !important; color: #fff; }
.pair { display: flex; }
.ed { width: 23px; }
.lit { background: #585e68; }
.modes { display: flex; border-radius: 3px; overflow: hidden; height: 14px; gap: .500px; }
.modes svg { width: 14.300px; height: 14px; background: #555; }

.view3d { height: 540px; display: flex; flex-direction: column; }
.vheader { height: 19px; display: flex; align-items: center; background: #424242; padding: 0 6px 0 7px; }
.sel { width: 18px; height: 18px; margin-left: 10px; }
.vheader .modes { margin-left: 11px; }
.vmid { display: flex; gap: 5px; margin-left: 241px; }
.w-orient { width: 61px; }
.w-orient b { width: 34px; margin-left: 3px; }
.w-pivot { width: 23px; }
.vmid .pair .btn { width: 25px; }
.dim { color: #888; }
.opt { width: 59px; margin-left: auto; gap: 5px; }
.canvas { flex: 1; position: relative; background: #929594; overflow: hidden; border-radius: 0 0 4px 4px; }
.wires { position: absolute; inset: 0; width: 960px; height: 521px; }
.overlaybar { position: absolute; top: 3px; right: 6px; display: flex; gap: 4px; }
.overlaybar .btn, .overlaybar .tog { height: 15px; }
.overlaybar > .btn { width: 24px; }
.overlaybar .c { width: 15px; }
.overlaybar .xr { background: #6a6a69; }
.shade .tog, .shade .btn { border-radius: 0; }

.navgizmo { position: absolute; left: 724px; top: 25px; width: 60px; height: 66px; }
.navbtns { position: absolute; left: 761px; top: 90px; display: grid; gap: 1.800px; }
.navbtns span { width: 22px; height: 22px; border-radius: 50%; background: #5b5c5c; display: grid; place-items: center; color: #e8e8e8; }
.navbtns svg { width: 13px; height: 13px; }

.npanel { position: absolute; left: 790px; top: 20px; width: 155px; height: 301px; background: #3c3c3c; }
.npanel h3 { height: 19px; background: #484b4a; display: flex; align-items: center; padding: 0 6px 0 6px; font-size: 9px; color: #e2e2e2; }
.npanel h3 i { width: 12px; font-size: 6px; }
.grip { width: 10px; height: 5px; margin-left: auto; color: #888; }
.nbody { padding: 3px 7px; }
.nbody label { display: block; height: 18.500px; line-height: 21px; padding-left: 6px; }
.vec { display: flex; }
.fields { width: 108px; display: grid; gap: 1px; border-radius: 3px; overflow: hidden; }
.fields.full { width: 141px; }
.fields p { height: 14.500px; line-height: 15px; background: #575757; padding: 0 11px; display: flex; justify-content: space-between; }
.locks { display: grid; margin-left: 14px; align-items: center; }
.locks svg { width: 12px; height: 12px; color: #8a8a8a; }
.euler { height: 14px; margin: 3px 0 0; padding: 0 1px 0 6px; background: #2b2b2b; border-radius: 3px; display: flex; align-items: center; justify-content: space-between; }
.ntabs { position: absolute; left: 945px; top: 20px; width: 15px; bottom: 0; background: #252525; padding-top: 4px; display: flex; flex-direction: column; gap: 3.500px; }
.ntabs span { width: 14px; background: #2c2c2c; writing-mode: vertical-rl; text-orientation: sideways; transform: rotate(180deg); text-align: center; line-height: 14px; border-radius: 0 3px 3px 0; }
.ntabs .active { background: #424242; }
.t1 { height: 40px; } .t2 { height: 33px; } .t3 { height: 35px; } .t4 { height: 44px; } .t5 { height: 25px; }

.toolshelf { position: absolute; left: 7px; top: 170px; width: 31px; }
.toolshelf span { display: flex; flex-direction: column; align-items: center; background: #303030; border-radius: 3px; }
.toolshelf .cut { height: 21px; justify-content: flex-end; padding-bottom: 3px; }
.cut svg { width: 18px; height: 11px; }
.tools { margin-top: 4px; height: 53px; justify-content: space-around; }
.tools svg { width: 20px; height: 20px; }

.edmenu { position: absolute; left: 7px; top: 0; width: 658px; height: 178px; background: #272727; box-shadow: 0 1px 3px #0008; color: #e2e2e2; border-radius: 0 0 3px 3px; }
.edtitle { height: 22.600px; width: 190px; border-bottom: 1px solid #333; padding: 5.500px 5px; color: #ccc; display: flex; }
.ghost { display: flex; gap: 20px; margin-left: 26px; color: #333; }
.cols { display: grid; grid-template-columns: 190px 150px 162px 156px; }
.cols li { height: 16.850px; display: flex; align-items: center; padding: 0 5px; }
.cols svg { width: 12px; height: 12px; margin-right: 6px; color: #e0e0e0; }
.cols .h { color: #aaa; padding-top: 1.500px; }
.cols kbd { margin-left: auto; font: inherit; color: #858585; }
.cols .hot { background: #4f77b6; height: 14.850px; margin: 1px 2px 1px 0; padding-right: 3px; color: #fff; }
.hot kbd { color: #a9bad6; }
.under { color: #3a3a3a; }
.tooltip { position: absolute; left: 23px; top: 132px; width: 117px; height: 42px; background: #1c1c1cf4; border-radius: 3px; padding: 5px 8px; color: #ccc; }
.tooltip p { height: 16.500px; line-height: 17px; }

.timeline { height: 42px; display: flex; flex-direction: column; background: #2c2c2c; border-radius: 4px; overflow: hidden; }
.theader { height: 18px; background: #383838; display: flex; align-items: center; padding: 0 15px 0 7px; }
.play { width: 35px; margin-left: 6px; gap: 5px; border-radius: 3px 0 0 3px; }
.key { width: 58px; gap: 5px; margin-left: 1px; border-radius: 0 3px 3px 0; }
.tm { width: 36px; margin-left: 7px; }
.tm2 { margin-left: 0; }
.rec { margin-left: 207px; width: 14px; }
.rec .i9 { width: 6px; height: 6px; }
.transport { width: 92px; height: 14px; margin-left: 5px; }
.frame { width: 57px; height: 14px; line-height: 14px; text-align: center; background: #575757; border-radius: 3px; margin-left: auto; margin-right: 5px; }
.range { display: flex; width: 149px; gap: 1px; border-radius: 3px; overflow: hidden; }
.range em { width: 15px; height: 14px; display: grid; place-items: center; background: #4b4b4b; }
.range > span { flex: 1; height: 14px; line-height: 14px; background: #575757; padding: 0 11px; display: flex; justify-content: space-between; }
.ruler { height: 15px; display: flex; align-items: center; color: #aaa; padding-top: 2px; }
.cur { margin-left: 26px; width: 20px; height: 13px; line-height: 14px; text-align: center; background: #4f77b6; color: #fff; border-radius: 3px; }
.nums { display: grid; grid-template-columns: repeat(25, 35.700px); text-align: center; margin-left: 3.500px; line-height: 9px; }
.scroll { height: 9px; display: flex; align-items: center; justify-content: space-between; color: #999; }
.bar { width: 948px; height: 7px; border-radius: 4px; background: #666; display: flex; justify-content: space-between; align-items: center; padding: 0 1px; }
.bar i { width: 5px; height: 5px; border-radius: 50%; background: #444; }

.outliner { height: 188px; background: #282828; border-radius: 4px; overflow: hidden; }
.oheader { height: 19px; background: #383838; display: flex; align-items: center; padding: 0 5px 0 8px; gap: 5px; }
.oheader .btn { width: 23px; }
.search { width: 87px; height: 14px; background: #1d1d1d; border-radius: 3px; margin-left: 10px; padding: 1px 3px; color: #bbb; }
.oheader .filt { margin-left: auto; }
.rows { padding-top: 1px; }
.row { height: 15.550px; display: flex; align-items: center; }
.row:nth-child(even) { background: #2e2e2e; }
.row > svg { width: 11px; height: 11px; margin-right: 4.500px; color: #ddd; }
.row > .faint { color: #5a5a5a; }
.tree { width: 149px; margin-right: 2px; height: 15.550px; display: flex; align-items: center; overflow: hidden; color: #c8c8c8; }
.tree > * { flex: none; }
.tree svg { width: 12px; height: 12px; margin-right: 3px; }
.tree span { margin-left: 3px; line-height: 10px; }
.tree svg.ck { width: 9px; height: 9px; margin: 0 4px 0 7px; }
.tree i { width: 7px; font-size: 5px; text-align: center; color: #bbb; }
.tree em { width: 5px; height: 1px; background: #555; margin-right: 1px; }
.tree .sel-ic { background: #555; border-radius: 3px; outline: 1px solid #555; }
.tree .x1 { margin-left: 15px; }
.tree .x2 { margin-left: 16.500px; }
.tree .act { color: #e39a2a; }
.d0 { padding-left: 18px; } .d1 { padding-left: 20px; } .d2 { padding-left: 35.500px; } .d3 { padding-left: 51px; }

.properties { flex: 1; background: #424242; border-radius: 4px; overflow: hidden; display: flex; flex-direction: column; }
.pheader { height: 18px; background: #383838; padding: 2px 8px; }
.pheader .btn { width: 23px; }
.pmain { flex: 1; display: flex; }
.ptabs { width: 22px; background: #212121; padding: 7px 0 0 1px; display: flex; flex-direction: column; gap: 1.800px; }
.ptabs span { height: 20px; background: #2d2d2d; border-radius: 3px 0 0 3px; display: grid; place-items: center; }
.ptabs svg { width: 12px; height: 12px; }
.ptabs .active { background: #424242; }
.ptabs .gap1 { margin-top: 6px; }
.ptabs .gap2 { margin-top: 5.500px; }
.pbody { flex: 1; }
.toolname { height: 35px; display: flex; align-items: center; padding: 0 0 6px 1px; gap: 7px; }
.pbody .modes { width: 74px; margin-left: 7px; }
.pbody h4 { height: 19px; margin-top: 7px; display: flex; align-items: center; padding: 0 6px 0 6px; font-size: 9px; color: #ddd; }
.pbody h4 i, .pbody h5 i { width: 11px; font-size: 5.500px; }
.pbody h5 { height: 19px; background: #383838; display: flex; align-items: center; padding-left: 17px; }
.limits { height: 86px; background: #303030; padding: 4px 9px 0 13px; }
.limits p { height: 19.500px; display: flex; align-items: center; justify-content: flex-end; gap: 8px; }
.limits .lt { justify-content: flex-start; }
.limits s { width: 9px; height: 9px; border-radius: 2px; background: #636363; }
.limits + h4 { margin-top: 0; }

.status { height: 17px; background: #303030; border-top: 1px solid #1c1c1c; display: flex; align-items: center; padding-left: 9px; color: #b2b2b2; padding-right: 24px; }
.status svg { width: 9px; height: 12px; }
.s1 { margin-left: 8px; width: 25px; } .s2 { margin-left: 6px; width: 134px; } .s3 { margin-left: 10px; width: 183px; } .s4 { margin-left: 8px; }
.status small { font-size: 6px; width: 3px; }
.stats { margin-left: auto; font-size: 7.880px; }
.marks { position: absolute; inset: 0; width: 1200px; height: 642px; }
```
